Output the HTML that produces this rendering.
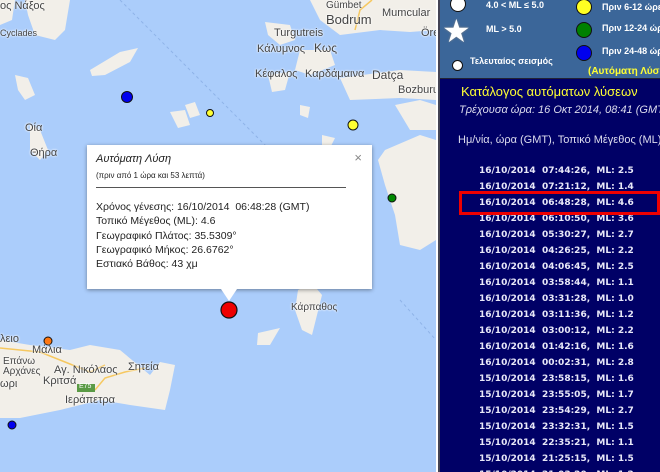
<!DOCTYPE html>
<html><head><meta charset="utf-8"><style>
*{margin:0;padding:0;box-sizing:border-box}
body{width:660px;height:472px;overflow:hidden;position:relative;background:#abcdfb;font-family:"Liberation Sans","DejaVu Sans",sans-serif}
#map{position:absolute;left:0;top:0;width:436px;height:472px;background:#abcdfb;overflow:hidden}
.lbl{position:absolute;font-size:11px;color:#444;white-space:nowrap;text-shadow:0 0 2px #fff,0 0 2px #fff}
#sep{position:absolute;left:436px;top:0;width:4px;height:472px;background:#fff;border-left:1px solid #fff;border-right:2px solid #445}
#panel{position:absolute;left:440px;top:0;width:220px;height:472px;background:#000066;overflow:hidden}
#legend{position:absolute;left:0;top:0;width:220px;height:79px;background:#3b6699;border-bottom:1px solid #223}
.lg{position:absolute;color:#fff;font-weight:bold;font-size:9px;white-space:nowrap}
.dot{position:absolute;border-radius:50%;border:1.5px solid #111}
.row{position:absolute;left:39px;font-family:"DejaVu Sans",sans-serif;font-weight:bold;font-size:9px;color:#e8e8f8;white-space:nowrap;word-spacing:0px}
#popup{position:absolute;left:87px;top:145px;width:285px;height:144px;background:#fff;box-shadow:0 1px 4px rgba(0,0,0,.4);font-size:10.5px;color:#222}
</style></head><body>
<div id="map">
<svg width="436" height="472" style="position:absolute;left:0;top:0">
<g fill="#f2efe9">
<path d="M25 0 L70 0 L65 30 L55 40 L35 35 L28 15Z"/>
<path d="M0 0 L15 0 L12 20 L0 25Z"/>
<path d="M90 70 L120 52 L138 48 L130 62 L105 75 L92 76Z"/>
<path d="M15 75 L28 78 L35 95 L25 100 L18 90Z"/>
<path d="M30 125 L40 130 L48 150 L40 160 L30 150Z"/>
<path d="M170 112 L185 110 L190 125 L178 128Z"/>
<path d="M185 105 L195 102 L200 115 L190 118Z"/>
<path d="M265 22 L290 25 L295 40 L280 45 L268 35Z"/>
<path d="M300 50 L330 50 L335 65 L310 75 L295 70Z"/>
<path d="M268 75 L290 72 L285 90 L272 92Z"/>
<path d="M310 0 L436 0 L436 30 L410 32 L380 30 L340 35 L320 20Z"/>
<path d="M340 78 L400 70 L436 72 L436 100 L400 98 L350 100Z"/>
<path d="M395 105 L420 100 L436 105 L436 130 L410 130Z"/>
<path d="M300 105 L310 107 L308 118 L300 115Z"/>
<path d="M322 135 L335 138 L330 148 L322 146Z"/>
<path d="M385 150 L420 135 L436 140 L436 240 L420 250 L400 245 L395 215 L385 185 L378 160Z"/>
<path d="M298 290 L312 283 L322 295 L312 335 L302 330 L295 310Z"/>
<path d="M258 333 L280 328 L270 345 L257 345Z"/>
<path d="M0 340 L30 345 L70 350 L90 345 L120 350 L150 375 L160 362 L175 365 L170 390 L165 410 L130 405 L100 400 L60 410 L20 418 L0 418Z"/>
</g>
<g fill="none" stroke="#f6c860" stroke-width="1.5">
<path d="M0 348 L40 352 L60 360 L90 372 L105 365"/>
<path d="M95 390 L105 378 L125 372 L145 368"/>
<path d="M355 30 L360 10 L372 0"/>
</g>
<path d="M120 0 L270 150" stroke="#8fb3e8" stroke-dasharray="3,3" fill="none"/>
<path d="M400 300 L436 340" stroke="#8fb3e8" stroke-dasharray="3,3" fill="none"/>
<circle cx="127" cy="97" r="5.5" fill="#0000ee" stroke="#111"/>
<circle cx="210" cy="113" r="3.5" fill="#ffff33" stroke="#111"/>
<circle cx="353" cy="125" r="5" fill="#ffff33" stroke="#111"/>
<circle cx="392" cy="198" r="4" fill="#008800" stroke="#111"/>
<circle cx="229" cy="310" r="8" fill="#ee0000" stroke="#111" stroke-width="1.2"/>
<circle cx="48" cy="341" r="4" fill="#ff7711" stroke="#111"/>
<circle cx="12" cy="425" r="4" fill="#0000ee" stroke="#111"/>
<rect x="77" y="384" width="18" height="8" fill="#5a9a45"/>
</svg>
<div class="lbl" style="left:0;top:0">ος Νάξος</div>
<div class="lbl" style="left:0;top:28px;font-size:9px">Cyclades</div>
<div class="lbl" style="left:25px;top:122px">Οία</div>
<div class="lbl" style="left:30px;top:147px">Θήρα</div>
<div class="lbl" style="left:326px;top:0;font-size:10px">Gümbet</div>
<div class="lbl" style="left:326px;top:12px;font-size:13px">Bodrum</div>
<div class="lbl" style="left:382px;top:7px">Mumcular</div>
<div class="lbl" style="left:421px;top:27px">Ören</div>
<div class="lbl" style="left:274px;top:27px">Turgutreis</div>
<div class="lbl" style="left:257px;top:43px">Κάλυμνος</div>
<div class="lbl" style="left:314px;top:41px;font-size:12px">Κως</div>
<div class="lbl" style="left:255px;top:68px">Κέφαλος</div>
<div class="lbl" style="left:305px;top:68px">Καρδάμαινα</div>
<div class="lbl" style="left:372px;top:68px;font-size:12px">Datça</div>
<div class="lbl" style="left:398px;top:84px">Bozburun</div>
<div class="lbl" style="left:291px;top:302px;font-size:10px">Κάρπαθος</div>
<div class="lbl" style="left:0;top:333px">λειο</div>
<div class="lbl" style="left:32px;top:344px">Μάλια</div>
<div class="lbl" style="left:3px;top:356px;font-size:10px">Επάνω</div>
<div class="lbl" style="left:3px;top:366px;font-size:10px">Αρχάνες</div>
<div class="lbl" style="left:54px;top:364px">Αγ. Νικόλαος</div>
<div class="lbl" style="left:43px;top:375px">Κριτσά</div>
<div class="lbl" style="left:128px;top:361px">Σητεία</div>
<div class="lbl" style="left:0;top:378px">ωρι</div>
<div class="lbl" style="left:79px;top:383px;font-size:7px;color:#fff;text-shadow:none">E75</div>
<div class="lbl" style="left:65px;top:394px">Ιεράπετρα</div>
<div id="popup">
<div style="position:absolute;left:9px;top:8px;font-style:italic;font-size:11px">Αυτόματη Λύση</div>
<div style="position:absolute;left:9px;top:26px;font-size:8px">(πριν από 1 ώρα και 53 λεπτά)</div>
<div style="position:absolute;right:10px;top:5px;font-size:13px;color:#888">×</div>
<div style="position:absolute;left:9px;top:42px;width:250px;border-top:1px solid #555"></div>
<div style="position:absolute;left:9px;top:55px;line-height:14.3px">Χρόνος γένεσης: 16/10/2014&nbsp; 06:48:28 (GMT)<br>Τοπικό Μέγεθος (ML): 4.6<br>Γεωγραφικό Πλάτος: 35.5309°<br>Γεωγραφικό Μήκος: 26.6762°<br>Εστιακό Βάθος: 43 χμ</div>
<div style="position:absolute;left:134px;top:144px;width:0;height:0;border-left:8px solid transparent;border-right:8px solid transparent;border-top:12px solid #fff"></div>
</div>
</div>
<div id="sep"></div>
<div id="panel">
<div id="legend">
<div class="dot" style="left:10px;top:-4px;width:16px;height:16px;background:#fff"></div>
<div class="lg" style="left:46px;top:0">4.0 &lt; ML ≤ 5.0</div>
<div style="position:absolute;left:2px;top:14px;font-size:32px;color:#fff;line-height:34px;text-shadow:0 0 2px #888">★</div>
<div class="lg" style="left:46px;top:24px">ML &gt; 5.0</div>
<div class="dot" style="left:12px;top:60px;width:11px;height:11px;background:#fff"></div>
<div class="lg" style="left:30px;top:56px">Τελευταίος σεισμός</div>
<div class="dot" style="left:136px;top:-1px;width:16px;height:16px;background:#ffff22"></div>
<div class="lg" style="left:162px;top:2px">Πριν 6-12 ώρες</div>
<div class="dot" style="left:136px;top:22px;width:16px;height:16px;background:#008000"></div>
<div class="lg" style="left:162px;top:23px">Πριν 12-24 ώρες</div>
<div class="dot" style="left:136px;top:45px;width:16px;height:16px;background:#0000ee"></div>
<div class="lg" style="left:162px;top:46px">Πριν 24-48 ώρες</div>
<div class="lg" style="left:148px;top:66px;color:#ffff33;font-size:10px">(Αυτόματη Λύση)</div>
</div>
<div style="position:absolute;left:21px;top:84px;font-size:13px;color:#ffff33;white-space:nowrap">Κατάλογος αυτόματων λύσεων</div>
<div style="position:absolute;left:19px;top:104px;font-size:11px;font-style:italic;color:#dde;white-space:nowrap">Τρέχουσα ώρα: 16 Οκτ 2014, 08:41 (GMT)</div>
<div style="position:absolute;left:18px;top:134px;font-size:11px;color:#dde;white-space:nowrap">Ημ/νία, ώρα (GMT), Τοπικό Μέγεθος (ML)</div>
<div class="row" style="top:166px">16/10/2014&nbsp; 07:44:26,&nbsp; ML: 2.5</div>
<div class="row" style="top:182px">16/10/2014&nbsp; 07:21:12,&nbsp; ML: 1.4</div>
<div class="row" style="top:198px">16/10/2014&nbsp; 06:48:28,&nbsp; ML: 4.6</div>
<div class="row" style="top:214px">16/10/2014&nbsp; 06:10:50,&nbsp; ML: 3.6</div>
<div class="row" style="top:230px">16/10/2014&nbsp; 05:30:27,&nbsp; ML: 2.7</div>
<div class="row" style="top:246px">16/10/2014&nbsp; 04:26:25,&nbsp; ML: 2.2</div>
<div class="row" style="top:262px">16/10/2014&nbsp; 04:06:45,&nbsp; ML: 2.5</div>
<div class="row" style="top:278px">16/10/2014&nbsp; 03:58:44,&nbsp; ML: 1.1</div>
<div class="row" style="top:294px">16/10/2014&nbsp; 03:31:28,&nbsp; ML: 1.0</div>
<div class="row" style="top:310px">16/10/2014&nbsp; 03:11:36,&nbsp; ML: 1.2</div>
<div class="row" style="top:326px">16/10/2014&nbsp; 03:00:12,&nbsp; ML: 2.2</div>
<div class="row" style="top:342px">16/10/2014&nbsp; 01:42:16,&nbsp; ML: 1.6</div>
<div class="row" style="top:358px">16/10/2014&nbsp; 00:02:31,&nbsp; ML: 2.8</div>
<div class="row" style="top:374px">15/10/2014&nbsp; 23:58:15,&nbsp; ML: 1.6</div>
<div class="row" style="top:390px">15/10/2014&nbsp; 23:55:05,&nbsp; ML: 1.7</div>
<div class="row" style="top:406px">15/10/2014&nbsp; 23:54:29,&nbsp; ML: 2.7</div>
<div class="row" style="top:422px">15/10/2014&nbsp; 23:32:31,&nbsp; ML: 1.5</div>
<div class="row" style="top:438px">15/10/2014&nbsp; 22:35:21,&nbsp; ML: 1.1</div>
<div class="row" style="top:454px">15/10/2014&nbsp; 21:25:15,&nbsp; ML: 1.5</div>
<div class="row" style="top:470px">15/10/2014&nbsp; 21:03:20,&nbsp; ML: 1.2</div>
<div style="position:absolute;left:19px;top:191px;width:201px;height:24px;border:3.5px solid #ee0000"></div>
</div>
</body></html>
